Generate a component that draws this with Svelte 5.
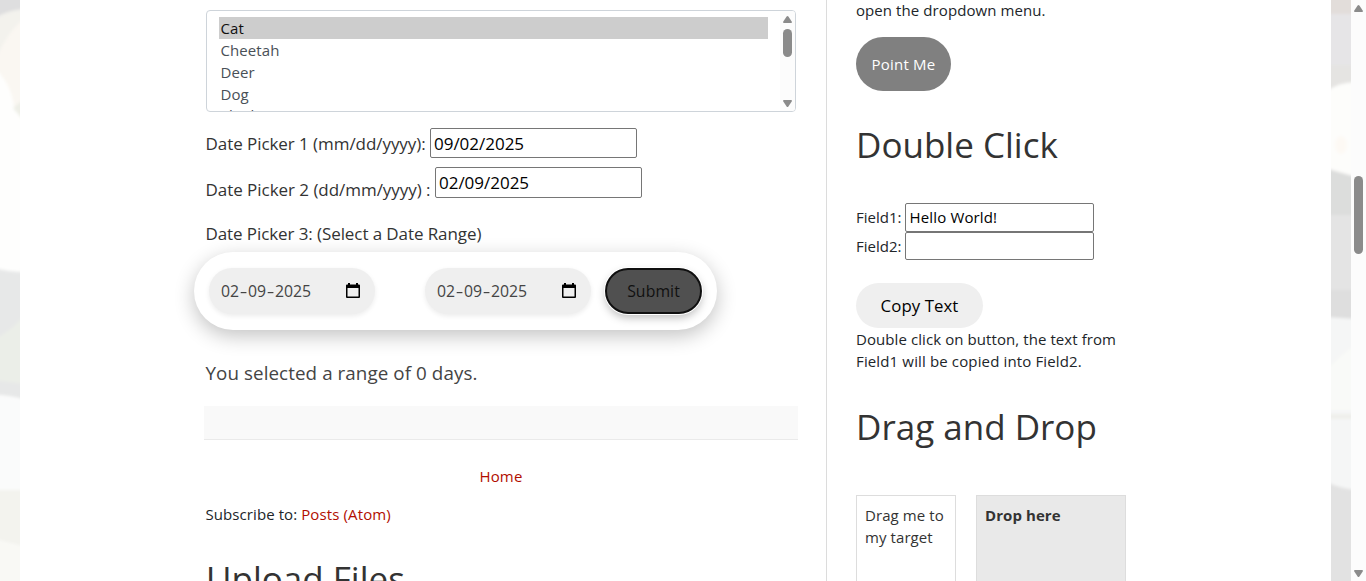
<script>
  const animals = ['Cat', 'Cheetah', 'Deer', 'Dog', 'Elephant'];
  const dates = [['02', '09', '2025'], ['02', '09', '2025']];
</script>

<div class="page">
  <svg class="strip" width="20" height="581" viewBox="0 0 20 581">
    <defs>
      <filter id="soft" x="-50%" y="-5%" width="200%" height="110%"><feGaussianBlur stdDeviation="1.5" /></filter>
    </defs>
    <rect width="20" height="581" fill="#fefefd" />
    <g filter="url(#soft)">
      <path d="M-5-5H25V9Q8 11-5 18Z" fill="#dededf" />
      <path d="M-5 18Q8 10 25 9V20Q8 30-5 62Z" fill="#f3f2ed" />
      <path d="M-5 62Q8 30 25 18V118L14 108Q12 85-5 68Z" fill="#faf7f2" />
      <path d="M25 98L13 108L25 122Z" fill="#eeefe7" />
      <path d="M-5 268Q8 272 25 272V400Q10 395-5 395Z" fill="#e7e8e8" />
      <path d="M-5 339Q10 332 25 315V384L-5 380Z" fill="#ebeee8" />
      <path d="M-5 396Q10 395 25 402V490H-5Z" fill="#fafbfb" />
      <path d="M-5 490H25V547L-5 539Z" fill="#f3f3ee" />
      <path d="M-5 539L25 547V590H-5Z" fill="#f9f9f5" />
    </g>
  </svg>

  <main>
    <div class="list">
      <div class="options">
        {#each animals as a, i}
          <div class="option" class:on={i === 0}><span>{a}</span></div>
        {/each}
      </div>
      <svg class="bar" width="15" height="100" viewBox="0 0 15 100">
        <rect width="15" height="100" fill="#fcfcfc" />
        <path d="M3 11L6.600 5.600Q7.500 4.500 8.400 5.600L12 11Q12 12 11 12H4Q3 12 3 11Z" fill="#8b8b8b" />
        <rect x="3" y="18" width="9" height="28" rx="4.500" fill="#8b8b8b" />
        <path d="M3 90L6.600 95.400Q7.500 96.500 8.400 95.400L12 90Q12 89 11 89H4Q3 89 3 90Z" fill="#8b8b8b" />
      </svg>
    </div>

    <div class="row one"><span class="label l1">Date Picker 1 (mm/dd/yyyy):</span><div class="field"><span>09/02/2025</span></div></div>
    <div class="row two"><span class="label l2">Date Picker 2 (dd/mm/yyyy) :</span><div class="field"><span>02/09/2025</span></div></div>
    <div class="row three"><span class="label l3">Date Picker 3: (Select a Date Range)</span></div>

    <div class="range">
      {#each dates as [d, m, y]}
        <div class="date">
          <span>{d}<i>-</i>{m}<i>-</i>{y}</span>
          <svg width="14" height="16" viewBox="0 0 14 16">
            <path d="M2 0H4V1.500H10V0H12V1.500H13Q14 1.500 14 2.500V14Q14 15 13 15H1Q0 15 0 14V2.500Q0 1.500 1 1.500H2ZM1.500 5V13.500H12.500V5Z" fill="#000" fill-rule="evenodd" />
          </svg>
        </div>
      {/each}
      <div class="submit"><span>Submit</span></div>
    </div>

    <div class="result"><span>You selected a range of 0 days.</span></div>
    <div class="band"></div>
    <div class="home"><span>Home</span></div>
    <div class="feed"><span>Subscribe to:</span><span class="link">Posts (Atom)</span></div>
    <h2 class="upload">Upload Files</h2>
  </main>

  <aside>
    <p class="hint"><span>open the dropdown menu.</span></p>
    <div class="point"><span>Point Me</span></div>
    <h2 class="double">Double Click</h2>
    <div class="pair first"><span>Field1:</span><div class="input"><b>Hello World!</b></div></div>
    <div class="pair"><span>Field2:</span><div class="input"></div></div>
    <div class="copy"><span>Copy Text</span></div>
    <p class="note"><span>Double click on button, the text from</span><br /><span class="wide">Field1 will be copied into Field2.</span></p>
    <h2 class="drag">Drag and Drop</h2>
    <div class="boxes">
      <div class="box source"><span>Drag me to</span><br /><span>my target</span></div>
      <div class="box target"><strong>Drop here</strong></div>
    </div>
  </aside>

  <svg class="strip" width="20" height="581" viewBox="0 0 20 581">
    <rect width="20" height="581" fill="#e5e4e2" />
    <g filter="url(#soft)">
      <path d="M-5-5H25V14H-5Z" fill="#e2ddda" />
      <path d="M-5 14H25V65H-5Z" fill="#e6e5e7" />
      <path d="M-5 92Q7 82 25 82V177Q8 172-5 168Z" fill="#fdfdfb" />
      <ellipse cx="10" cy="145" rx="6" ry="9" fill="#fdf9f4" />
      <path d="M-5 169Q8 173 25 177V215H-5Z" fill="#dcdddc" />
      <path d="M-5 215H25V290H-5Z" fill="#e4e4e4" />
      <path d="M-5 290H25V320H-5Z" fill="#dedede" />
      <path d="M-5 317L25 319V493Q8 488-5 482Z" fill="#f5f6f6" />
      <path d="M-5 370Q15 350 25 345V410H-5Z" fill="#f9faf8" />
      <path d="M-5 414H25V419H-5Z" fill="#efefeb" />
      <path d="M-5 482Q8 488 25 490V590H-5Z" fill="#e2e2e2" />
    </g>
  </svg>
  <svg class="scroll" width="15" height="581" viewBox="0 0 15 581">
    <rect width="15" height="581" fill="#fcfcfc" />
    <path d="M3 11L6.600 5.600Q7.500 4.500 8.400 5.600L12 11Q12 12 11 12H4Q3 12 3 11Z" fill="#8b8b8b" />
    <rect x="3" y="176" width="9" height="78" rx="4.500" fill="#8b8b8b" />
    <path d="M3 571L6.600 576.400Q7.500 577.500 8.400 576.400L12 571Q12 570 11 570H4Q3 570 3 571Z" fill="#8b8b8b" />
  </svg>
</div>

<style>
  :global(body) { overflow: hidden; background: #fff; }
  .page { display: flex; width: 1366px; height: 581px; overflow: hidden; box-sizing: border-box; font: 15px/22px "Open Sans", "Noto Sans", sans-serif; letter-spacing: .08px; color: #212529; white-space: nowrap; }
  .page * { box-sizing: border-box; }
  .strip, .scroll { flex: none; display: block; }
  main { width: 807px; flex: none; padding: 10px 30px 0 186px; border-right: 1px solid #dcdcdc; }
  aside { width: 504px; flex: none; padding-left: 29px; }
  p, h2 { margin: 0; }
  h2 { font: 400 35px/48px "Open Sans", sans-serif; letter-spacing: 0; color: #333; }
  .list { display: flex; width: 590px; height: 102px; border: 1px solid #ced4da; border-radius: 4px; overflow: hidden; }
  .options { width: 549px; margin: 6px 12px 0 12px; flex: none; }
  .option { height: 22px; padding-left: 1.500px; line-height: 23px; color: #495057; }
  .option.on { background: #cdcdcd; color: #101010; }
  .option:last-child { line-height: 21px; }
  .bar { display: block; flex: none; }
  .row { display: flex; margin-left: -1px; font-size: 17px; line-height: 30px; color: #333; }
  .label { flex: none; padding: 1px 0 0 .5px; }
  .one { height: 30px; margin-top: 16px; }
  .l1 { width: 225px; letter-spacing: -.06px; }
  .two { height: 31px; margin-top: 9px; }
  .l2 { width: 230px; padding-top: 8px; letter-spacing: -.04px; }
  .three { margin-top: 20px; height: 30px; }
  .l3 { letter-spacing: -.09px; }
  .field { width: 207px; height: 100%; border: 1px solid #767676; border-radius: 2px; padding-left: 3px; line-height: 29px; letter-spacing: -.02px; color: #000; background: #fff; }
  .range { display: flex; align-items: center; width: 523px; height: 78px; margin: 4px 0 0 -12.500px; padding-left: 15.500px; border-radius: 39px; background: #fff; box-shadow: 0 6px 20px rgba(0, 0, 0, .24); }
  .date { display: flex; align-items: center; width: 166px; height: 46px; margin-right: 50px; padding: 0 15px 0 12px; justify-content: space-between; border-radius: 23px; background: #efefef; color: #444; font-size: 15.8px; box-shadow: 0 2px 5px rgba(0, 0, 0, .08); }
  .date span { letter-spacing: 0; }
  .date i { display: inline-block; margin: 0 1.900px; font-style: normal; transform: scaleX(1.5); }
  .date:nth-child(2) { margin-right: 14px; }
  .date svg { display: block; }
  .submit { width: 97px; height: 46px; border: 2px solid #101010; border-radius: 23px; background: #505050; color: #101010; text-align: center; font-size: 15.8px; line-height: 42px; box-shadow: 0 0 0 1px #fff, 0 4px 8px rgba(0, 0, 0, .25); }
  .result { height: 30px; margin: 28px 0 0 -.5px; font-size: 18.8px; line-height: 30px; color: #444; }
  .band { width: 594px; height: 34px; margin: 18px 0 0 -2px; background: #f9f9f9; border-bottom: 1px solid #eaeaea; }
  .home { margin-top: 25px; text-align: center; color: #b20d00; letter-spacing: .2px; }
  .feed { display: flex; gap: 4px; margin: 16px 0 0 -.5px; }
  .link { color: #b20d00; letter-spacing: .12px; }
  .upload { margin-top: 30px; }
  .hint { height: 22px; line-height: 20px; }
  .point { width: 95px; height: 54px; margin-top: 15px; border-radius: 27px; background: #808080; color: #fff; text-align: center; line-height: 55px; letter-spacing: .2px; }
  .double { margin-top: 30px; height: 50px; }
  .pair { display: flex; height: 28px; line-height: 29px; }
  .first { height: 29px; margin-top: 32px; line-height: 28px; }
  .pair > span { width: 49px; letter-spacing: 0; }
  .pair b { font-weight: 400; letter-spacing: .15px; }
  .input { width: 189px; height: 100%; border: 1px solid #767676; border-radius: 2px; padding-left: 3.500px; line-height: 27px; color: #000; }
  .copy { width: 127px; height: 45px; margin-top: 23px; border-radius: 23px; background: #efefef; color: #000; text-align: center; font-size: 16.8px; line-height: 45px; }
  .note { height: 44px; }
  .wide { letter-spacing: .14px; }
  .drag { margin-top: 31px; height: 50px; }
  .boxes { display: flex; gap: 20px; margin-top: 42px; align-items: flex-start; }
  .box { height: 120px; border: 1px solid #ddd; padding: 8px 0 0 8px; color: #333; }
  .source { width: 100px; background: #fff; }
  .target { width: 150px; background: #e9e9e9; }
  .target strong { font-weight: 700; }
</style>
